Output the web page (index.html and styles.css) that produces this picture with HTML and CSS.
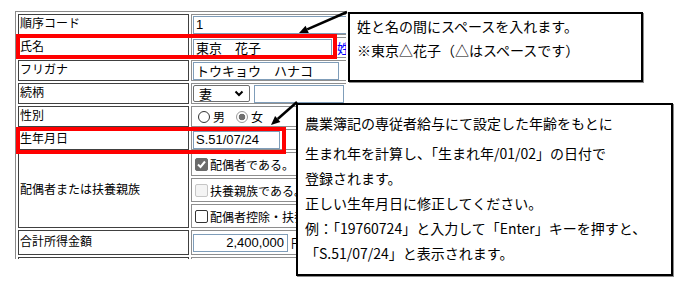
FILE: index.html
```html
<!DOCTYPE html>
<html lang="ja">
<head>
<meta charset="utf-8">
<title>家族情報の入力</title>
<link rel="stylesheet" href="styles.css">
</head>
<body>
<div class="page">
  <div class="form-clip">
    <table class="form">
      <tr class="row">
        <th class="lbl">順序コード</th>
        <td class="val"><div class="line"><input class="inp w-code" type="text" value="1"></div></td>
      </tr>
      <tr class="row">
        <th class="lbl">氏名</th>
        <td class="val"><div class="line"><input class="inp w-name" type="text" value="東京　花子"><a class="link">姓と名の分割</a></div></td>
      </tr>
      <tr class="row">
        <th class="lbl">フリガナ</th>
        <td class="val"><div class="line"><input class="inp w-kana" type="text" value="トウキョウ　ハナコ"></div></td>
      </tr>
      <tr class="row">
        <th class="lbl">続柄</th>
        <td class="val"><div class="line"><span class="sel">妻<svg class="chev" width="10" height="7" viewBox="0 0 10 7"><polyline points="1.5,1.5 5,5 8.5,1.5"/></svg></span><input class="inp w-rel" type="text" value=""></div></td>
      </tr>
      <tr class="row">
        <th class="lbl">性別</th>
        <td class="val"><div class="line"><span class="radio"></span><span class="opt">男</span><span class="radio on"></span><span class="opt">女</span></div></td>
      </tr>
      <tr class="row">
        <th class="lbl">生年月日</th>
        <td class="val"><div class="line"><input class="inp w-date" type="text" value="S.51/07/24"></div></td>
      </tr>
      <tr class="row-c">
        <th class="lbl" rowspan="3">配偶者または扶養親族</th>
        <td class="val"><div class="line"><span class="cb on"><svg width="11" height="11" viewBox="0 0 11 11"><polyline points="2,5.5 4.5,8 9,2.5"/></svg></span><span class="opt">配偶者である。</span></div></td>
      </tr>
      <tr class="row-c">
        <td class="val"><div class="line"><span class="cb dis"></span><span class="opt">扶養親族である。</span></div></td>
      </tr>
      <tr class="row-c">
        <td class="val"><div class="line"><span class="cb"></span><span class="opt">配偶者控除・扶養控除の対象</span></div></td>
      </tr>
      <tr class="row-m">
        <th class="lbl">合計所得金額</th>
        <td class="val"><div class="line"><input class="inp w-amt" type="text" value="2,400,000"><span class="unit">円</span></div></td>
      </tr>
      <tr class="row">
        <th class="lbl">&nbsp;</th>
        <td class="val"></td>
      </tr>
    </table>
  </div>

  <div class="hl hl-name"></div>
  <div class="hl hl-birth"></div>

  <svg class="arrows" width="698" height="296" viewBox="0 0 698 296">
    <line x1="347" y1="12" x2="307.2" y2="29.4"/>
    <polygon points="299,33 308.8,33.1 305.6,25.7"/>
    <line x1="297" y1="102" x2="277.7" y2="119"/>
    <polygon points="271,125 280.4,122 275.1,116"/>
  </svg>

  <div class="callout c1">
    <p>姓と名の間にスペースを入れます。</p>
    <p>※東京△花子（△はスペースです）</p>
  </div>

  <div class="callout c2">
    <p class="lead">農業簿記の専従者給与にて設定した年齢をもとに</p>
    <p class="body">生まれ年を計算し、「生まれ年/01/02」の日付で<br>登録されます。<br>正しい生年月日に修正してください。<br>例：「19760724」と入力して「Enter」キーを押すと、<br>「S.51/07/24」と表示されます。</p>
  </div>
</div>
</body>
</html>
```

FILE: styles.css
```css
* { box-sizing: border-box; }

html, body {
  margin: 0;
  padding: 0;
  background: #fff;
}

body {
  width: 698px;
  height: 296px;
  overflow: hidden;
  color: #000;
  font-family: "Liberation Sans", "Noto Sans CJK JP", sans-serif;
}

.page {
  position: relative;
  display: flow-root;
  width: 698px;
  height: 296px;
  padding: 11px 0 0 15px;
}

/* ---------- form table ---------- */
.form-clip {
  width: 331px;
  height: 248px;
  overflow: hidden;
}

.form {
  width: 390px;
  table-layout: fixed;
  border: 1px solid #8a8a8a;
  border-collapse: separate;
  border-spacing: 2px;
}

.form th,
.form td {
  padding: 0;
  white-space: nowrap;
  vertical-align: middle;
  line-height: 17px;
  font-size: 12px;
  font-family: "Liberation Sans", "Noto Sans CJK JP", sans-serif;
}

.lbl {
  width: 171px;
  border: 1px solid #404040;
  padding-left: 1px !important;
  font-weight: normal;
  text-align: left;
}

.val {
  border: 1px solid #8e8e8e;
  padding-left: 1px !important;
  overflow: hidden;
}

.row > th, .row > td { height: 21px; }
.row-c > th, .row-c > td { height: 24px; }
.row-m > th, .row-m > td { height: 25px; }

.line {
  display: flex;
  align-items: center;
  white-space: nowrap;
}

.inp {
  height: 18px;
  margin: 0;
  padding: 0 2px;
  border: 1px solid #7f9db9;
  background: #fff;
  color: #000;
  font-size: 13px;
  font-family: "Liberation Sans", "Noto Sans CJK JP", sans-serif;
  outline: none;
  flex: none;
}

.w-code { width: 190px; }
.w-name { width: 139px; }
.w-kana { width: 146px; }
.w-rel  { width: 90px; margin-left: 4px; }
.w-date { width: 87px; }
.w-amt  { width: 95px; text-align: right; padding-right: 3px; }

.link {
  margin-left: 5px;
  color: #0000ff;
  font-size: 13px;
  font-family: "Noto Sans CJK JP", sans-serif;
}

.sel {
  display: inline-flex;
  align-items: center;
  justify-content: space-between;
  width: 57px;
  height: 17px;
  padding: 0 5px 0 5px;
  border: 1px solid #6e6e6e;
  border-radius: 2px;
  font-size: 13px;
  font-family: "Noto Sans CJK JP", sans-serif;
  flex: none;
}

.chev polyline {
  fill: none;
  stroke: #000;
  stroke-width: 2;
}

.radio {
  width: 12px;
  height: 12px;
  border: 1px solid #333;
  border-radius: 50%;
  background: #fff;
  margin-left: 5px;
  flex: none;
}

.radio + .opt { margin-left: 3px; }
.opt + .radio { margin-left: 11px; }

.radio.on {
  border-color: #9a9a9a;
  background: radial-gradient(circle, #707070 0 3px, #fff 3.6px);
}

.opt {
  font-size: 12px;
  font-family: "Noto Sans CJK JP", sans-serif;
}

.cb {
  display: inline-flex;
  align-items: center;
  justify-content: center;
  width: 13px;
  height: 13px;
  margin-left: 2px;
  border: 1px solid #333;
  border-radius: 2px;
  background: #fff;
  flex: none;
}

.cb + .opt { margin-left: 2px; }

.cb.on {
  background: #6b6b6b;
  border-color: #6b6b6b;
}

.cb.on polyline {
  fill: none;
  stroke: #fff;
  stroke-width: 2;
}

.cb.dis {
  border-color: #c6c6c6;
  background: #f4f4f4;
}

.unit {
  margin-left: 3px;
  font-size: 12px;
  font-family: "Noto Sans CJK JP", sans-serif;
}

/* ---------- highlight frames ---------- */
.hl {
  position: absolute;
  border: 4px solid #ff0000;
}

.hl-name  { left: 16px; top: 34px;  width: 321px; height: 25px; }
.hl-birth { left: 16px; top: 127px; width: 270px; height: 27px; }

/* ---------- arrows ---------- */
.arrows {
  position: absolute;
  left: 0;
  top: 0;
}

.arrows line {
  stroke: #000;
  stroke-width: 2.5;
}

.arrows polygon {
  fill: #000;
}

/* ---------- callouts ---------- */
.callout {
  position: absolute;
  background: #fff;
  border: 2px solid #000;
  box-shadow: 1px 1px 0 #8c8c8c;
  font-family: "Noto Sans CJK JP", sans-serif;
  font-size: 14px;
  white-space: nowrap;
}

.callout p { margin: 0; }

.c1 {
  left: 348px;
  top: 12px;
  width: 295px;
  height: 70px;
  padding: 0 0 0 7px;
  line-height: 24px;
}

.c2 {
  left: 296px;
  top: 103px;
  width: 377px;
  height: 173px;
  padding: 6px 0 0 7px;
}

.c2 .lead { line-height: 24px; }
.c2 .body { margin-top: 6px; line-height: 25px; }
```
